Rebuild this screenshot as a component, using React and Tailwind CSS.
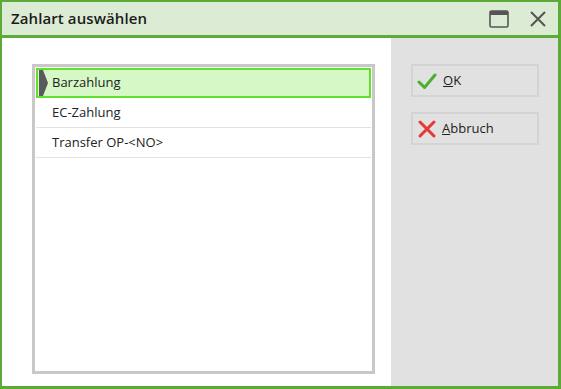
import React, { useState } from 'react';

const items = ['Barzahlung', 'EC-Zahlung', 'Transfer OP-<NO>'];

const CheckIcon = () => (
  <svg width="20" height="18" viewBox="0 0 20 18" className="shrink-0">
    <path d="M2 10 L7.5 15.5 L18 3" fill="none" stroke="#4caf32" strokeWidth="3" strokeLinecap="round" strokeLinejoin="round" />
  </svg>
);

const CrossIcon = () => (
  <svg width="20" height="20" viewBox="0 0 20 20" className="shrink-0">
    <path d="M3 3 L17 17 M17 3 L3 17" fill="none" stroke="#e53935" strokeWidth="3" strokeLinecap="round" />
  </svg>
);

const App = () => {
  const [selected, setSelected] = useState(0);

  return (
    <div
      className="w-[561px] h-[389px] flex flex-col border-[2px] border-b-[3px] border-r-[3px] border-[#5aab38] bg-white overflow-hidden"
      style={{ fontFamily: '"Open Sans", "Liberation Sans", sans-serif' }}
    >
      {/* TITLE BAR */}
      <div className="h-[36px] shrink-0 flex items-center justify-between bg-[#dcebd4] border-b-[3px] border-[#5aab38] pl-[9px] pr-[11px]">
        <span className="text-[15px] font-semibold text-[#1b1b1b] tracking-[0.1px]">Zahlart auswählen</span>
        <div className="flex items-center gap-[20px]">
          <svg width="20" height="18" viewBox="0 0 20 18">
            <rect x="1" y="1" width="18" height="16" rx="1.5" fill="none" stroke="#555" strokeWidth="1.6" />
            <rect x="1" y="1" width="18" height="4" fill="#555" />
          </svg>
          <svg width="18" height="18" viewBox="0 0 18 18">
            <path d="M2 2 L16 16 M16 2 L2 16" stroke="#555" strokeWidth="2" />
          </svg>
        </div>
      </div>

      {/* BODY */}
      <div className="flex-1 flex">
        <div className="flex-1 pl-[30px] pr-[16px] pt-[26px] pb-[12px]">
          <div className="h-full border-[3px] border-[#c8c8c8] bg-white p-[1px]">
            {items.map((item, i) => (
              <div
                key={item}
                onClick={() => setSelected(i)}
                className={
                  selected === i
                    ? 'relative h-[30px] flex items-center pl-[14px] bg-[#d6f8c6] border-[2px] border-[#5fe12d] text-[13px] text-[#222]'
                    : 'relative h-[30px] flex items-center pl-[16px] border-b border-[#e2e2e2] text-[13px] text-[#222]'
                }
              >
                {selected === i && (
                  <svg width="9" height="26" viewBox="0 0 9 26" className="absolute left-[1px] top-[0px]">
                    <polygon points="0,0 4,0 9,13 4,26 0,26" fill="#5a5a5a" />
                  </svg>
                )}
                {item}
              </div>
            ))}
          </div>
        </div>

        <div className="w-[167px] shrink-0 bg-[#e1e1e1] pl-[20px] pt-[26px] flex flex-col gap-[15px]">
          <button className="w-[128px] h-[33px] flex items-center gap-[6px] pl-[4px] border-[2px] border-[#d3d3d3] bg-[#e1e1e1] text-[13px] text-[#222]">
            <CheckIcon />
            <span><span className="underline">O</span>K</span>
          </button>
          <button className="w-[128px] h-[33px] flex items-center gap-[5px] pl-[4px] border-[2px] border-[#d3d3d3] bg-[#e1e1e1] text-[13px] text-[#222]">
            <CrossIcon />
            <span><span className="underline">A</span>bbruch</span>
          </button>
        </div>
      </div>
    </div>
  );
};

export default App;
